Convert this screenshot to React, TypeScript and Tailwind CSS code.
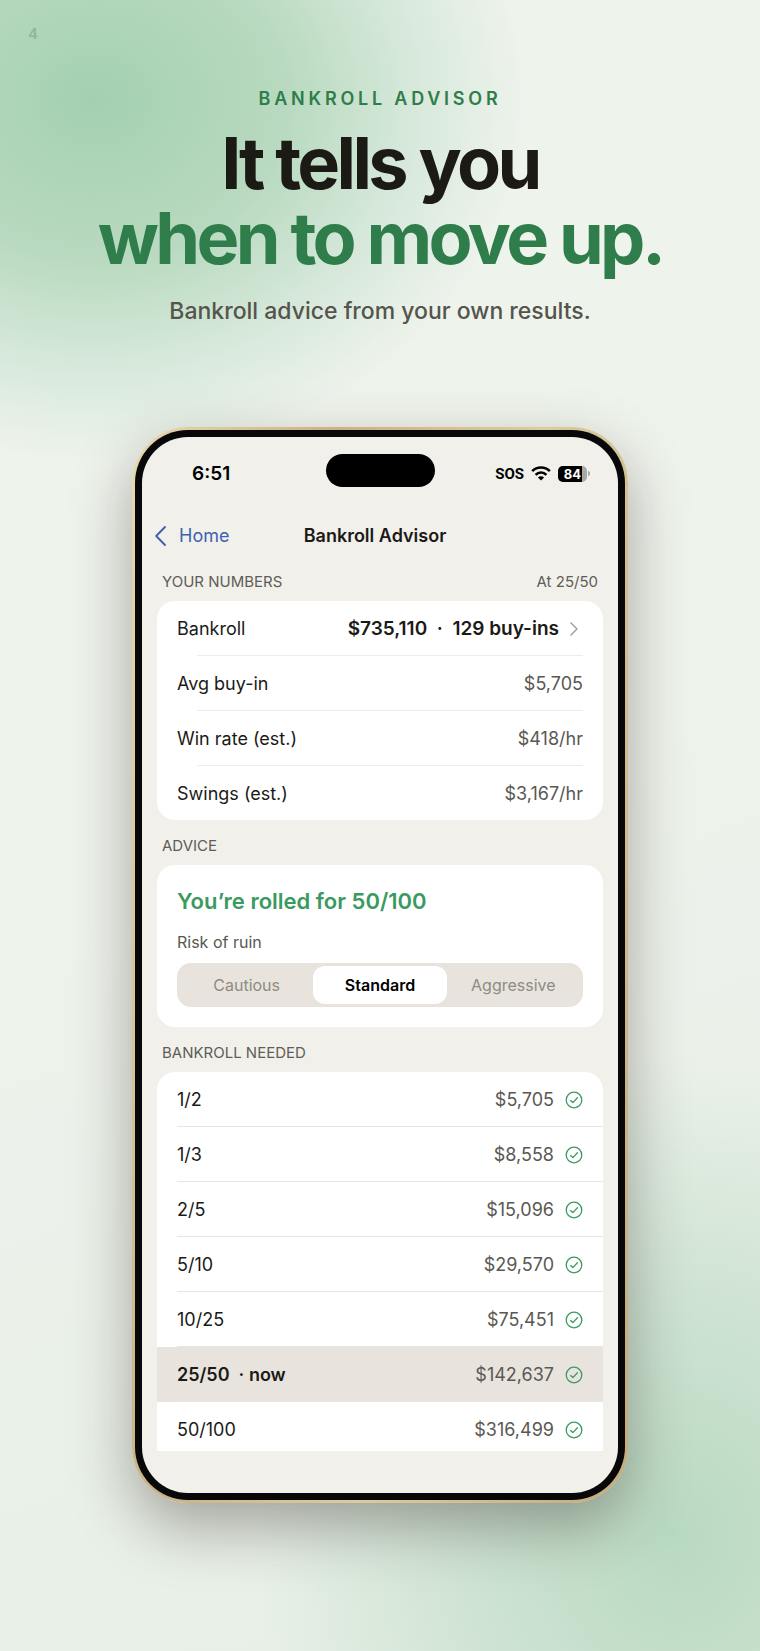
import React, { useState } from 'react';

interface Stake {
  name: string;
  needed: string;
  current?: boolean;
}

const numbers = [
  { label: 'Avg buy-in', value: '$5,705' },
  { label: 'Win rate (est.)', value: '$418/hr' },
  { label: 'Swings (est.)', value: '$3,167/hr' },
];

const stakes: Stake[] = [
  { name: '1/2', needed: '$5,705' },
  { name: '1/3', needed: '$8,558' },
  { name: '2/5', needed: '$15,096' },
  { name: '5/10', needed: '$29,570' },
  { name: '10/25', needed: '$75,451' },
  { name: '25/50', needed: '$142,637', current: true },
  { name: '50/100', needed: '$316,499' },
];

const riskLevels = ['Cautious', 'Standard', 'Aggressive'];

function WifiIcon() {
  return (
    <svg viewBox="0 0 20 15" className="w-5 h-[15px]" fill="none" stroke="#000" strokeWidth="2.6" aria-hidden="true">
      <path d="M1.2 5.2 A12.4 12.4 0 0 1 18.8 5.2" />
      <path d="M4.6 8.8 A7.6 7.6 0 0 1 15.4 8.8" />
      <path d="M10 14.6 L6.9 11.5 A4.4 4.4 0 0 1 13.1 11.5 Z" fill="#000" stroke="none" />
    </svg>
  );
}

function BackIcon() {
  return (
    <svg viewBox="0 0 11 20" className="h-5 w-[11px]" fill="none" stroke="currentColor" strokeWidth="1.9" strokeLinecap="round" strokeLinejoin="round" aria-hidden="true">
      <path d="M10 1 L1.2 10 L10 19" />
    </svg>
  );
}

function DisclosureIcon() {
  return (
    <svg viewBox="0 0 8 14" className="h-3.5 w-2" fill="none" stroke="#9a9a98" strokeWidth="1.4" strokeLinecap="round" strokeLinejoin="round" aria-hidden="true">
      <path d="M1 1 L7 7 L1 13" />
    </svg>
  );
}

function CheckIcon() {
  return (
    <svg viewBox="0 0 18 18" className="size-[18px]" fill="none" stroke="#3a9a60" strokeWidth="1.3" strokeLinecap="round" strokeLinejoin="round" aria-hidden="true">
      <circle cx="9" cy="9" r="7.8" />
      <path d="M5.6 9.6 L7.9 11.6 L12.4 6.8" />
    </svg>
  );
}

function Battery({ level }: { level: number }) {
  return (
    <div className="flex items-center gap-px">
      <div className="relative flex h-4 w-[29px] items-center justify-center overflow-hidden rounded-[5px] bg-[#a8a8a6]">
        <div className="absolute inset-y-0 left-0 bg-black" style={{ width: `${level}%` }} />
        <span className="relative text-[13px] leading-4 font-bold text-white">{level}</span>
      </div>
      <div className="h-[5px] w-0.5 rounded-r-full bg-[#a8a8a6]" />
    </div>
  );
}

function StatusBar() {
  return (
    <div className="grid grid-cols-[1fr_auto_1fr] items-center pt-[17px] pr-7 pl-[50px]">
      <span className="pt-[6px] text-[19px] leading-6 font-semibold text-black">6:51</span>
      <div className="-ml-[22px] h-[33px] w-[109px] rounded-full bg-black" />
      <div className="flex items-center justify-end gap-[7px] pt-[6px]">
        <span className="font-['Liberation_Sans_Narrow','Roboto',sans-serif] text-[15px] leading-5 font-bold text-black">SOS</span>
        <WifiIcon />
        <Battery level={84} />
      </div>
    </div>
  );
}

function SectionHeader({ title, note }: { title: string; note?: string }) {
  return (
    <div className="flex h-[45px] items-center justify-between px-[5px] pt-[6px] text-[15px] leading-5 text-[#5f5d57]">
      <h2 className="uppercase">{title}</h2>
      {note && <span>{note}</span>}
    </div>
  );
}

function NumberRow({ label, children }: { label: string; children: React.ReactNode }) {
  return (
    <div className="grid h-[55px] grid-cols-[1fr_auto] grid-rows-[1fr_auto] items-center px-5 pt-0.5 after:col-span-2 after:ml-5 after:h-px after:bg-[#ececea] last:h-[54px] last:after:hidden">
      <dt>{label}</dt>
      <dd className="text-[#5a5852]">{children}</dd>
    </div>
  );
}

function RiskPicker() {
  const [risk, setRisk] = useState('Standard');

  return (
    <fieldset>
      <legend className="text-[16px] leading-5 text-[#5a5852]">Risk of ruin</legend>
      <div className="mt-[11px] grid grid-cols-3 rounded-[14px] bg-[#e8e4dd] p-[3px]">
        {riskLevels.map((level) => (
          <label
            key={level}
            className="flex h-[38px] cursor-pointer items-center justify-center rounded-xl text-[16px] text-[#8f8b82] has-checked:bg-white has-checked:font-semibold has-checked:text-black"
          >
            <input
              type="radio"
              name="risk"
              value={level}
              checked={risk === level}
              onChange={() => setRisk(level)}
              className="sr-only"
            />
            {level}
          </label>
        ))}
      </div>
    </fieldset>
  );
}

function StakesTable() {
  return (
    <div className="max-h-[379px] overflow-hidden rounded-t-[18px] bg-white">
      <table className="w-full border-collapse">
        <tbody>
          {stakes.map((stake) => (
            <tr key={stake.name} className={stake.current ? 'bg-[#e8e4dd]' : ''}>
              <th scope="row" className="p-0 pl-5 text-left font-normal">
                <div className={`flex h-[55px] items-center border-b border-[#e6e6e4] pt-0.5 ${stake.current ? 'font-semibold' : ''}`}>
                  <span className="whitespace-pre">{stake.current ? `${stake.name}  · now` : stake.name}</span>
                </div>
              </th>
              <td className="p-0">
                <div className="flex h-[55px] items-center justify-end gap-[11px] border-b border-[#e6e6e4] pt-0.5 pr-5 text-[#5a5852]">
                  {stake.needed}
                  <CheckIcon />
                </div>
              </td>
            </tr>
          ))}
        </tbody>
      </table>
    </div>
  );
}

function Phone() {
  return (
    <div className="w-full max-w-[496px] rounded-[56px] bg-linear-[100deg,#e6d9b0,#c9b283_30%,#dccb9f_60%,#c4ac7c] p-[3px] shadow-[0_24px_60px_rgba(50,40,35,0.38)]">
      <div className="rounded-[53px] bg-[#08080a] p-[7px]">
        <div className="rounded-[46px] bg-[#f1f0eb] pb-[42px] text-[18px] leading-6 text-[#1b1a17]">
          <StatusBar />
          <nav className="mt-[37px] grid grid-cols-[1fr_auto_1fr] items-center pr-[23px] pl-[13px]">
            <a href="#" className="flex items-center gap-[13px] text-[#3d63b0]">
              <BackIcon />
              Home
            </a>
            <h1 className="font-semibold">Bankroll Advisor</h1>
          </nav>
          <div className="px-[15px] pt-2">
            <SectionHeader title="Your numbers" note="At 25/50" />
            <dl className="rounded-[18px] bg-white">
              <NumberRow label="Bankroll">
                <button className="flex items-center gap-[11px] pr-[5px] text-[19px] font-semibold text-[#1b1a17]">
                  <span className="whitespace-pre">$735,110  ·  129 buy-ins</span>
                  <DisclosureIcon />
                </button>
              </NumberRow>
              {numbers.map((n) => (
                <NumberRow key={n.label} label={n.label}>
                  {n.value}
                </NumberRow>
              ))}
            </dl>
            <SectionHeader title="Advice" />
            <div className="rounded-[18px] bg-white p-5">
              <p className="pb-[15px] text-[22px] leading-8 font-semibold text-[#3a9a60]">You’re rolled for 50/100</p>
              <RiskPicker />
            </div>
            <SectionHeader title="Bankroll needed" />
            <StakesTable />
          </div>
        </div>
      </div>
    </div>
  );
}

export default function App() {
  return (
    <main className="relative flex min-h-screen flex-col items-center overflow-hidden bg-[radial-gradient(ellipse_430px_360px_at_95px_100px,#a4d0b1,#b9dac0_45%,#d8e9dc_75%,transparent),radial-gradient(ellipse_420px_480px_at_89%_93%,#b8d9c1,#cfe3d3_50%,transparent),linear-gradient(160deg,#eef3ec,#eef3ec_50%,#e6efe6)] px-4 pt-[87px] pb-[140px] font-['Inter',sans-serif]">
      <span className="absolute top-6 left-7 text-[15px] leading-5 font-semibold text-[#8db79b]">4</span>
      <p className="text-[18px] leading-6 font-semibold tracking-[0.21em] text-[#2f7d4b] uppercase">Bankroll Advisor</p>
      <h1 className="mt-[14px] text-center text-[72px] leading-[75px] font-bold tracking-tighter text-[#1b1a15]">
        <span className="block">It tells you</span>
        <span className="block text-[#2f7d4b]">when to move up.</span>
      </h1>
      <p className="mt-5 mb-[100px] text-[23px] leading-8 font-medium text-[#55544c]">Bankroll advice from your own results.</p>
      <Phone />
    </main>
  );
}
